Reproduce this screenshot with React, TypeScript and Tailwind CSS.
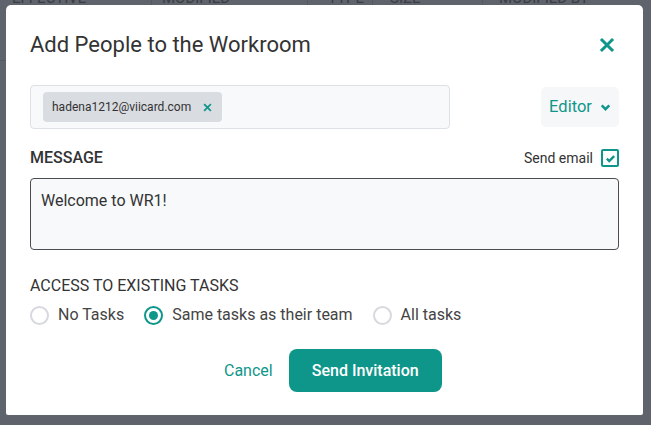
import React from "react";

const TEAL = "#0f968a";

function CloseIcon({ className }: { className?: string }) {
  return (
    <svg viewBox="0 0 16 16" className={className} fill="none" stroke="currentColor" strokeWidth={3} strokeLinecap="square">
      <path d="M3 3l10 10M13 3L3 13" />
    </svg>
  );
}

function Radio({ checked, label }: { checked?: boolean; label: string }) {
  return (
    <label className="flex items-center gap-[9px]">
      <span
        className={
          checked
            ? "flex h-[19px] w-[19px] items-center justify-center rounded-full border-2 border-[#0f968a]"
            : "h-[19px] w-[19px] rounded-full border-2 border-[#d6d9de]"
        }
      >
        {checked ? <span className="h-[9px] w-[9px] rounded-full bg-[#0f968a]" /> : null}
      </span>
      <span className="text-[16px] text-[#444]">{label}</span>
    </label>
  );
}

export default function App() {
  return (
    <div
      className="relative h-[425px] w-[651px] overflow-hidden bg-[#5f636b]"
      style={{ fontFamily: "Roboto, 'Noto Sans', sans-serif" }}
    >
      {/* page behind the dialog */}
      <div className="absolute left-0 right-0 top-[-9px] flex h-[14px] items-center text-[15px] uppercase text-[#3a3d43]">
        <span className="w-[151px] pl-[12px]">Effective</span>
        <span className="w-[156px] border-l border-[#555a61] pl-[10px]">Modified</span>
        <span className="w-[65px] border-l border-[#555a61] pl-[20px]">Type</span>
        <span className="w-[110px] border-l border-[#555a61] pl-[17px]">Size</span>
        <span className="flex-1 border-l border-[#555a61] pl-[16px]">Modified by</span>
      </div>
      <div className="absolute left-0 top-[60px] h-px w-[6px] bg-[#555a61]" />

      <div className="absolute left-[6px] top-[5px] flex h-[410px] w-[637px] flex-col rounded-t-[5px] rounded-b-[2px] bg-white px-[24px] pt-[25px]">
        <div className="flex items-center justify-between">
          <h2 className="text-[22px] leading-[29px] text-[#333]">Add People to the Workroom</h2>
          <button className="mr-[4px] text-[#0f968a]">
            <CloseIcon className="h-[16px] w-[16px]" />
          </button>
        </div>

        <div className="mt-[26px] flex items-center justify-between">
          <div className="flex h-[44px] w-[420px] items-center rounded-[4px] border border-[#dde0e5] bg-[#f8f9fb] px-[12px]">
            <span className="flex h-[30px] items-center gap-[12px] rounded-[4px] bg-[#d9dce1] pl-[9px] pr-[10px] text-[12px] text-[#333]">
              hadena1212@viicard.com
              <CloseIcon className="h-[9px] w-[9px] text-[#0f968a]" />
            </span>
          </div>
          <button className="flex h-[40px] w-[78px] items-center justify-center gap-[8px] rounded-[5px] bg-[#f5f7f9] text-[16.5px] text-[#0f968a]">
            Editor
            <svg viewBox="0 0 12 10" className="h-[9px] w-[11px]" fill="none" stroke="currentColor" strokeWidth={2.8}>
              <path d="M1.8 2.6l4.2 4.2 4.2-4.2" />
            </svg>
          </button>
        </div>

        <div className="mt-[17px] flex items-center justify-between">
          <span className="text-[16px] font-medium uppercase text-[#333]">Message</span>
          <label className="flex items-center gap-[8px] text-[14px] text-[#333]">
            Send email
            <span className="flex h-[18px] w-[18px] items-center justify-center rounded-[2px] border-[2.5px] border-[#0f968a]">
              <svg viewBox="0 0 12 12" className="h-[11px] w-[11px]" fill="none" stroke={TEAL} strokeWidth={2.6}>
                <path d="M2 6.2l2.6 2.6L10 3.4" />
              </svg>
            </span>
          </label>
        </div>

        <div className="mt-[8px] h-[72px] rounded-[4px] border border-[#4a4d52] bg-[#f8f9fb] px-[10px] py-[10px] text-[16px] text-[#333]">
          Welcome to WR1!
        </div>

        <div className="mt-[24px] text-[16px] uppercase text-[#333]">Access to existing tasks</div>
        <div className="mt-[5px] flex items-center gap-[20px]">
          <Radio label="No Tasks" />
          <Radio checked label="Same tasks as their team" />
          <Radio label="All tasks" />
        </div>

        <div className="mt-[22px] flex items-center gap-[14px] pl-[192px]">
          <button className="px-[2px] text-[16px] text-[#0f968a]">Cancel</button>
          <button className="h-[43px] w-[153px] rounded-[8px] bg-[#0f968a] text-[16px] font-medium text-white">
            Send Invitation
          </button>
        </div>
      </div>
    </div>
  );
}
